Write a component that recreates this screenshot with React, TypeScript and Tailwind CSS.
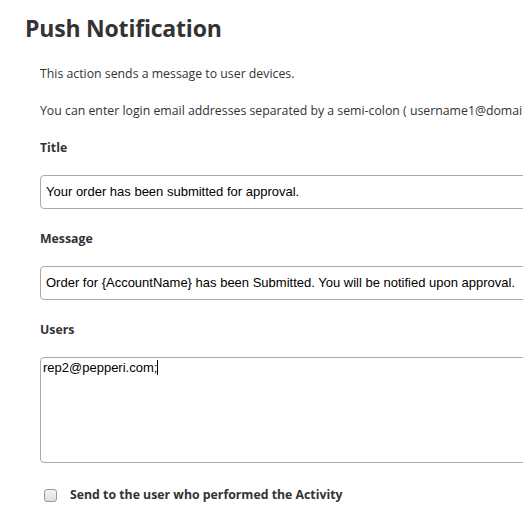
import React from "react";

export default function App() {
  return (
    <div className="w-[523px] h-[515px] overflow-hidden bg-white text-[#333333] font-['Open_Sans',sans-serif]">
      <div className="pl-[25px] pt-[12px]">
        <h1 className="text-[23px] leading-[32px] font-bold text-[#333333] tracking-[-0.2px]">Push Notification</h1>
        <div className="pl-[15px] pt-[21px]">
          <p className="text-[12.3px] leading-[18px]">This action sends a message to user devices.</p>
          <p className="text-[12.3px] leading-[18px] mt-[19px] whitespace-nowrap">
            You can enter login email addresses separated by a semi-colon ( username1@domain.com; username2@domain.com )
          </p>
          <div className="mt-[19px] text-[12.3px] leading-[18px] font-bold">Title</div>
          <div className="mt-[18px] w-[560px] h-[34px] border border-[#aaaaaa] rounded-[4px] flex items-center px-[5px] font-['Liberation_Sans',Arial,sans-serif] text-[13px] text-black whitespace-nowrap">
            Your order has been submitted for approval.
          </div>
          <div className="mt-[21px] text-[12.3px] leading-[18px] font-bold">Message</div>
          <div className="mt-[18px] w-[560px] h-[34px] border border-[#aaaaaa] rounded-[4px] flex items-center px-[5px] font-['Liberation_Sans',Arial,sans-serif] text-[13px] text-black whitespace-nowrap">
            Order for {"{AccountName}"} has been Submitted. You will be notified upon approval.
          </div>
          <div className="mt-[21px] text-[12.3px] leading-[18px] font-bold">Users</div>
          <div className="mt-[18px] w-[560px] h-[106px] border border-[#aaaaaa] rounded-[4px] px-[2px] pt-[2px] font-['Liberation_Sans',Arial,sans-serif] text-[13px] leading-[16px] text-black">
            rep2@pepperi.com;<span className="inline-block w-px h-[15px] bg-black align-[-3px]" />
          </div>
          <div className="mt-[23px] flex items-center">
            <span className="ml-[4px] w-[13px] h-[13px] border border-[#999999] rounded-[3px] bg-gradient-to-b from-[#f4f4f4] to-[#dedede]" />
            <span className="ml-[13px] text-[12.3px] leading-[18px] font-bold">Send to the user who performed the Activity</span>
          </div>
        </div>
      </div>
    </div>
  );
}
